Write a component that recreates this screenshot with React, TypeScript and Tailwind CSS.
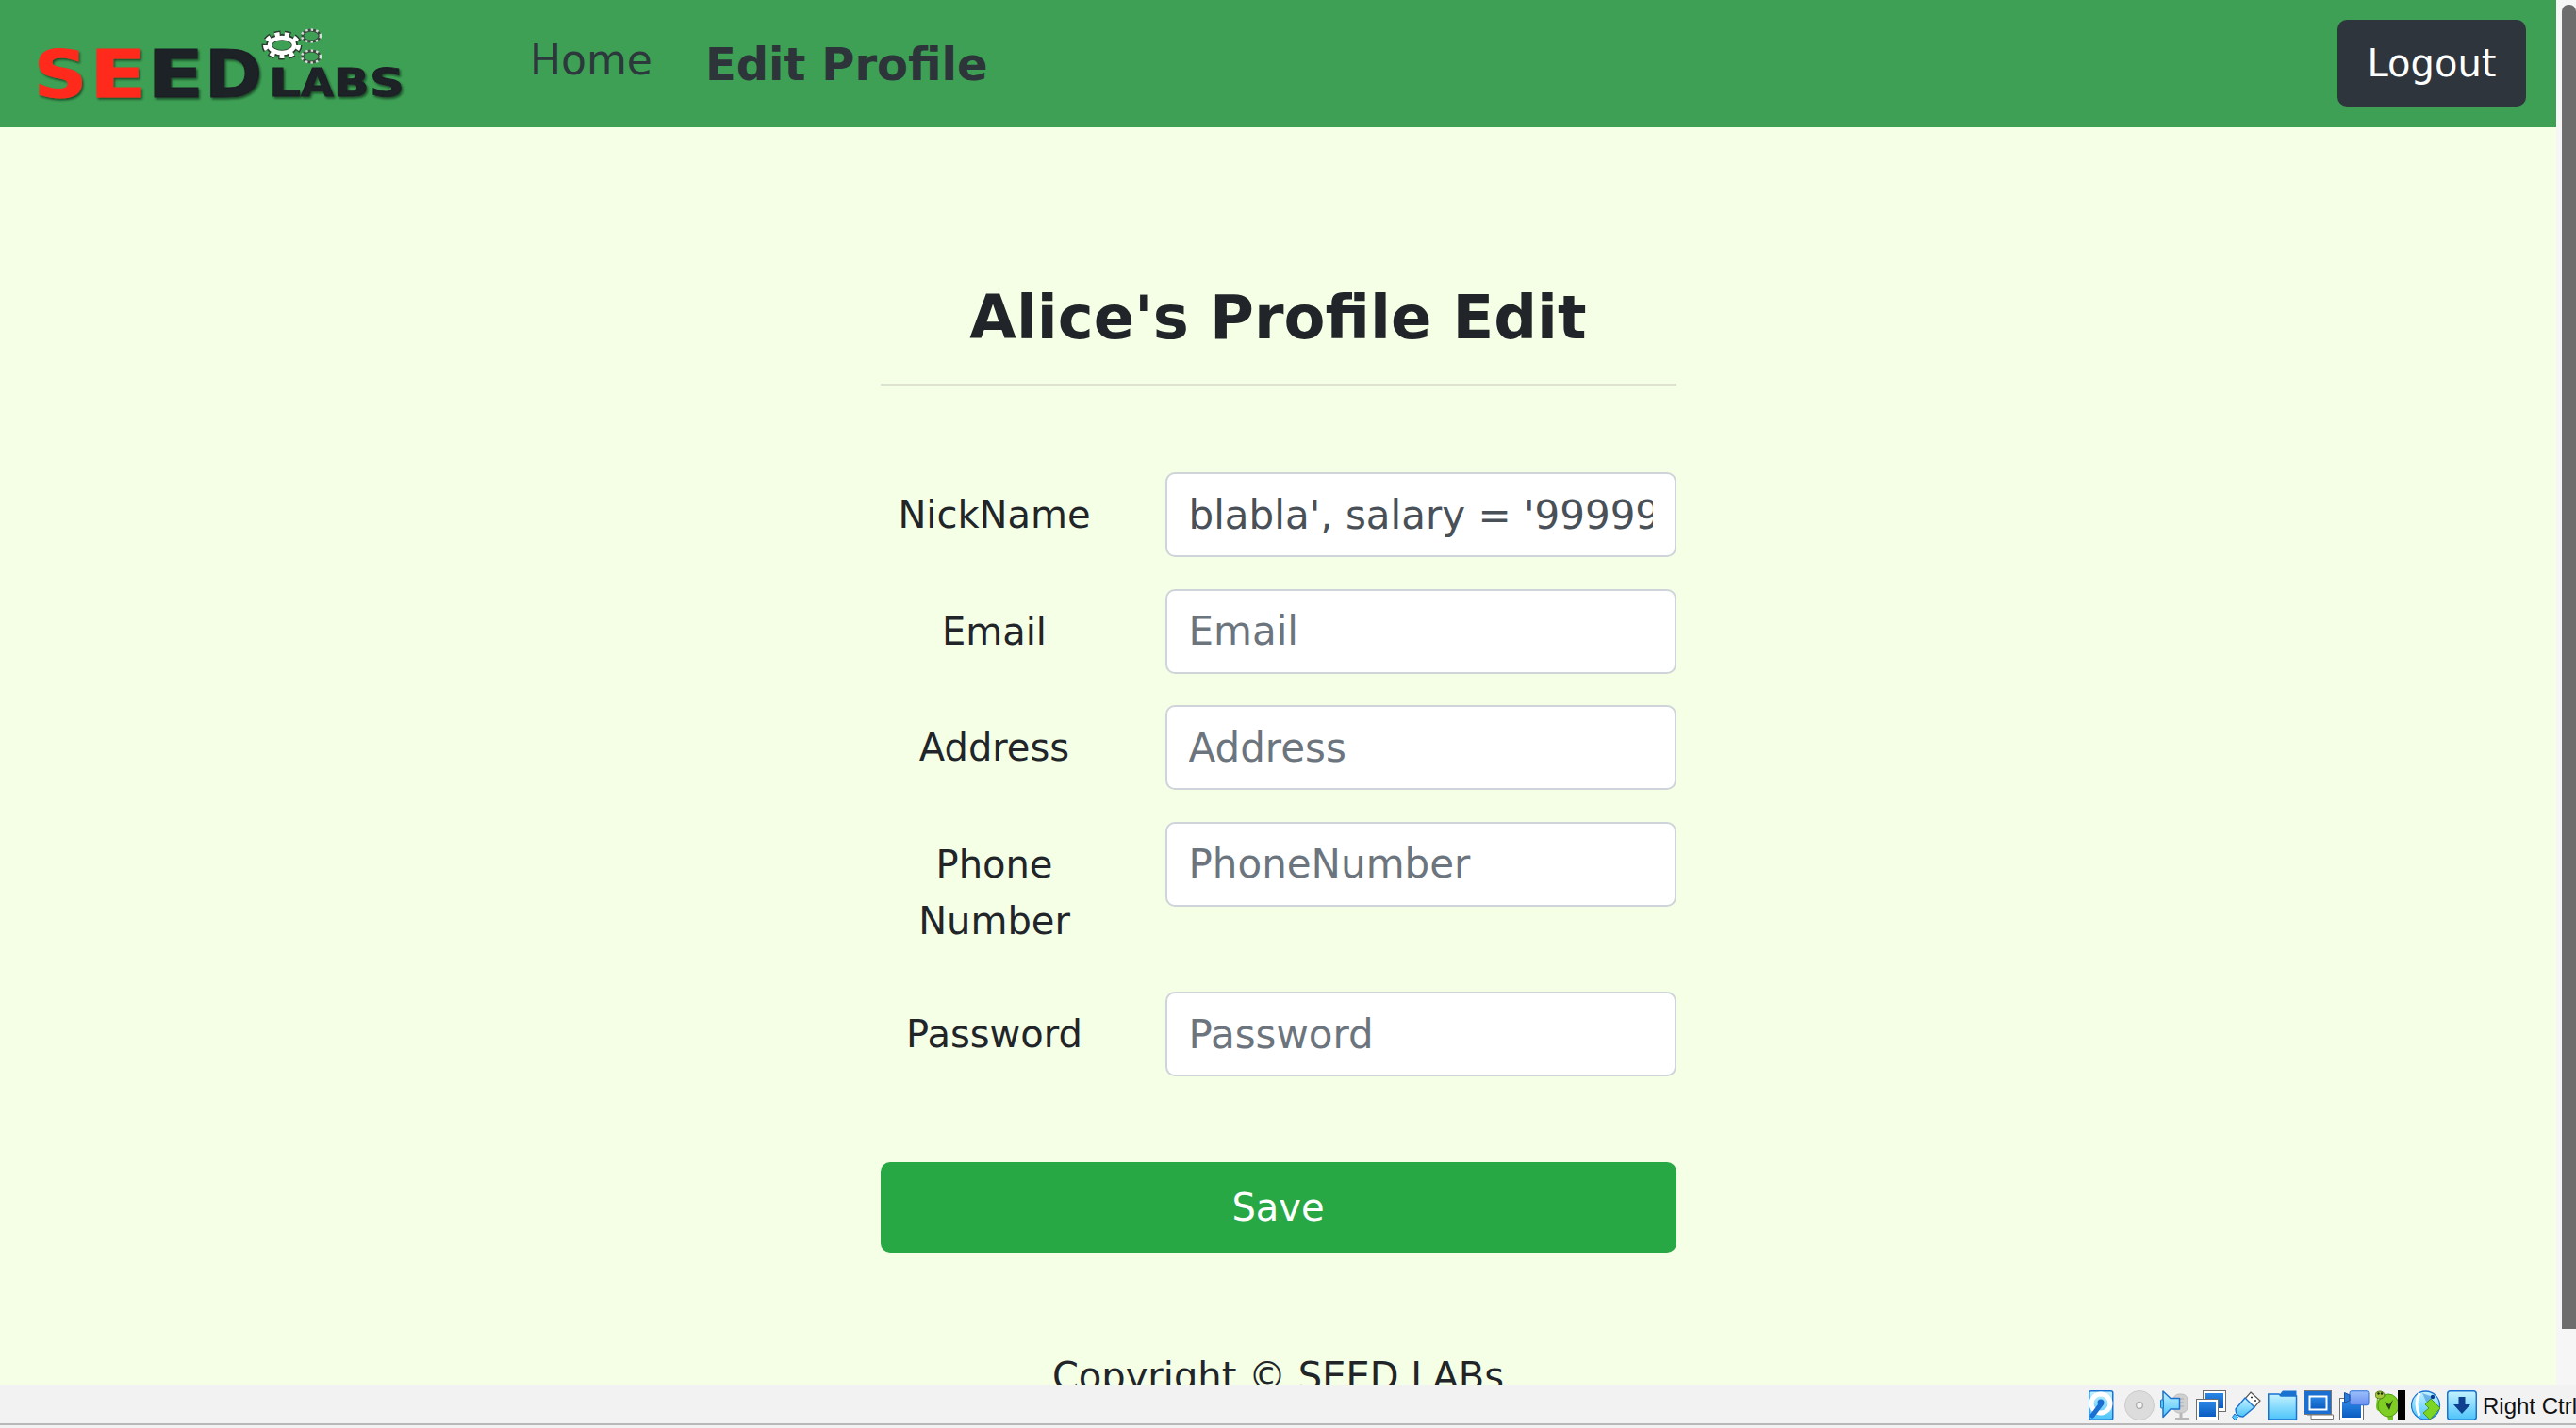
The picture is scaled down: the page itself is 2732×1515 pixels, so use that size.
const font = { fontFamily: '"DejaVu Sans", sans-serif' };

function Logo() {
  const big = "DejaVu Sans";
  const letter = (c: string, x: number, sx: number, fill: string) => (
    <text transform={`translate(${x} 103) scale(${sx} 1)`} fill={fill} stroke={fill}>{c}</text>
  );
  const small = (c: string, x: number, sx: number) => (
    <text transform={`translate(${x} 102) scale(${sx} 1)`}>{c}</text>
  );
  return (
    <svg width="410" height="135" viewBox="30 0 410 135" className="shrink-0">
      <defs>
        <filter id="ls" x="-10%" y="-10%" width="120%" height="125%">
          <feDropShadow dx="1.5" dy="2" stdDeviation="0.8" floodColor="#14301c" floodOpacity="0.75" />
        </filter>
      </defs>
      <g filter="url(#ls)" fontFamily={big} fontWeight="bold" fontSize="69" strokeWidth="1" strokeLinejoin="miter">
        {letter("S", 36, 1.13, "#ff2a1c")}
        {letter("E", 95, 1.28, "#ff2a1c")}
        {letter("E", 156, 1.28, "#1e2026")}
        {letter("D", 217, 1.07, "#1e2026")}
      </g>
      <g filter="url(#ls)" fontFamily={big} fontWeight="bold" fontSize="41" fill="#1e2026" stroke="#1e2026" strokeWidth="1">
        {small("L", 285, 1.3)}
        {small("A", 319, 1.1)}
        {small("B", 354, 1.2)}
        {small("S", 392, 1.25)}
      </g>
      <g fill="none">
        <ellipse cx="299" cy="48" rx="17.5" ry="11.5" stroke="#2a3a2e" strokeWidth="8" strokeDasharray="6 4.2" />
        <ellipse cx="299" cy="48" rx="13.5" ry="8.5" stroke="#2a3a2e" strokeWidth="7" />
        <ellipse cx="299" cy="48" rx="17.5" ry="11.5" stroke="#ffffff" strokeWidth="5" strokeDasharray="5 5.2" />
        <ellipse cx="299" cy="48" rx="13" ry="8" stroke="#ffffff" strokeWidth="4.5" />
        {[38, 60].map((y) => (
          <g key={y}>
            <ellipse cx="330" cy={y} rx="9" ry="6" stroke="#3a4a3e" strokeWidth="3" />
            <ellipse cx="330" cy={y} rx="10" ry="6.5" stroke="#d8dcd8" strokeWidth="2.5" strokeDasharray="2.5 3" />
          </g>
        ))}
      </g>
    </svg>
  );
}

function Field({ label, placeholder, value }: { label: string; placeholder: string; value?: string }) {
  return (
    <div className="flex mb-[33.5px]">
      <label className="w-[242px] shrink-0 pt-[15px] pb-[12px] px-[14px] text-center text-[40px] leading-[60px] text-[#212529]">{label}</label>
      <input
        readOnly
        placeholder={placeholder}
        value={value}
        style={font}
        className="ml-[60px] w-[542px] h-[90px] bg-white border-2 border-[#ced4da] rounded-[10px] px-[23px] text-[42px] text-[#495057] placeholder:text-[#6c757d] outline-none"
      />
    </div>
  );
}

function Defs() {
  return (
    <svg width="0" height="0" className="absolute">
      <defs>
        <linearGradient id="sky" x1="0" y1="0" x2="0" y2="1">
          <stop offset="0" stopColor="#c4f2ff" />
          <stop offset="1" stopColor="#4cc4fa" />
        </linearGradient>
        <linearGradient id="deep" x1="0" y1="0" x2="0" y2="1">
          <stop offset="0" stopColor="#2a86e4" />
          <stop offset="1" stopColor="#0b5cc0" />
        </linearGradient>
        <linearGradient id="peri" x1="0" y1="0" x2="0" y2="1">
          <stop offset="0" stopColor="#9cc0fa" />
          <stop offset="1" stopColor="#6a8ff0" />
        </linearGradient>
      </defs>
    </svg>
  );
}

function Icon({ children }: { children: React.ReactNode }) {
  return (
    <svg width="32" height="32" viewBox="0 0 32 32" className="shrink-0">
      {children}
    </svg>
  );
}

function Screen({ x, y, w, h }: { x: number; y: number; w: number; h: number }) {
  return (
    <g>
      <rect x={x + 0.5} y={y + 0.5} width={w - 1} height={h - 1} fill="#ffffff" stroke="#6e6e6e" />
      <rect x={x + 3} y={y + 3} width={w - 6} height={h - 7} fill="url(#deep)" />
    </g>
  );
}

function StatusIcons() {
  return (
    <div className="flex gap-[6px]">
      <Icon>
        <rect x="0.75" y="0.75" width="25" height="30.5" rx="2" fill="url(#sky)" stroke="#1a72d0" strokeWidth="1.5" />
        <circle cx="13" cy="14" r="10" fill="none" stroke="#ffffff" strokeWidth="5" />
        <circle cx="13" cy="13" r="3.5" fill="#1a6fd0" />
        <path d="M13 15 L4 27" stroke="#1a6fd0" strokeWidth="5" strokeLinecap="round" />
      </Icon>
      <Icon>
        <circle cx="16" cy="16" r="15.5" fill="#dcdcdc" stroke="#cccccc" />
        <circle cx="16" cy="16" r="3.3" fill="#f4f4f4" stroke="#a8a8a8" strokeWidth="1.2" />
      </Icon>
      <Icon>
        <rect x="14" y="4" width="15" height="20" rx="6" fill="#d0d0d0" stroke="#bdbdbd" />
        <path d="M18 9h7M18 13h7M18 17h7" stroke="#aaaaaa" />
        <path d="M16 29h15v2H16z" fill="#b8b8b8" />
        <path d="M22 24v5" stroke="#b8b8b8" strokeWidth="3" />
        <path d="M3 1 L11 8.5 H20.5 V20 H11 L3 28.5 Z" fill="url(#sky)" stroke="#1a72d0" strokeWidth="1.5" strokeLinejoin="round" />
        <rect x="0.5" y="10" width="3" height="9" rx="1" fill="#4cc4fa" stroke="#1a72d0" />
      </Icon>
      <Icon>
        <Screen x={7} y={0} w={25} h={23} />
        <Screen x={0} y={9} w={24} h={23} />
      </Icon>
      <Icon>
        <path d="M20 2 L30 11 L24 18 L14 9 Z" fill="#ffffff" stroke="#555555" strokeWidth="1.2" />
        <path d="M20 7.5h2M24 11h2" stroke="#333333" strokeWidth="1.6" />
        <path d="M14 8 L24 18 L12 28 Q8 28 6 26 Q4 24 4 20 Z" fill="url(#sky)" stroke="#1a72d0" strokeWidth="1.4" strokeLinejoin="round" />
        <path d="M3 25 L6.5 28.5 L3.5 31.5 L0.5 28.5 Z" fill="#4cc4fa" stroke="#1a72d0" />
      </Icon>
      <Icon>
        <path d="M13 4 L16 0.5 H30.5 V6 H13 Z" fill="#1a72d0" />
        <path d="M0.75 4 H12 L14 6 H30.5 V31 H0.75 Z" fill="url(#sky)" stroke="#1a72d0" strokeWidth="1.5" />
      </Icon>
      <Icon>
        <rect x="0.5" y="0.5" width="29" height="25" fill="#1a6fd0" stroke="#777777" />
        <rect x="3" y="3" width="25" height="20" fill="#1a6fd0" />
        <rect x="6.5" y="6.5" width="18" height="14" fill="url(#deep)" stroke="#ffffff" strokeWidth="2" />
        <path d="M4 26 H31.5 V30.5 H8 V26" fill="#ffffff" stroke="#777777" />
      </Icon>
      <Icon>
        <rect x="0.5" y="8.5" width="25" height="23" fill="#ffffff" stroke="#6e6e6e" />
        <rect x="3" y="12" width="20" height="17" fill="url(#deep)" />
        <rect x="11" y="0.75" width="20" height="15" rx="2" fill="url(#peri)" stroke="#2a6fd6" />
        <path d="M11 5 L5.5 2.5 V13 L11 11 Z" fill="#2a78d8" stroke="#1a4fa0" />
      </Icon>
      <Icon>
        <path d="M2 8 Q5 13 8 14 L6 22 Q1 23 1 17 Z" fill="#74c01e" />
        <path d="M13 27 H19 V32 H14 Z" fill="#74c01e" />
        <ellipse cx="14" cy="16" rx="11" ry="12" fill="#7fce23" stroke="#4f9a13" />
        <path d="M10 12 L15 21 L19 10 L15 15 Z" fill="#27401a" />
        <ellipse cx="5" cy="5" rx="5" ry="4" fill="#a5c63c" stroke="#4f7a13" />
        <circle cx="3.5" cy="3.5" r="1.2" fill="#1e2a10" />
        <circle cx="7" cy="3.5" r="1.2" fill="#1e2a10" />
        <rect x="24" y="0" width="8" height="32" fill="#000000" />
      </Icon>
      <Icon>
        <circle cx="15.5" cy="16" r="15" fill="url(#sky)" stroke="#1a72d0" strokeWidth="1.3" />
        <path d="M9 3 Q3 14 9 27" fill="none" stroke="#ffffff" strokeWidth="3" />
        <path d="M12 3 L23 7 L17 14" fill="#1a72d0" fillOpacity="0.45" />
        <circle cx="23" cy="7" r="2.2" fill="#0b3d8c" />
        <path d="M21 9 L31 19 L20 31 L13 24 L19 19 L15 15 Z" fill="#7cd425" stroke="#4b9a13" />
      </Icon>
      <Icon>
        <rect x="0.75" y="0.75" width="30.5" height="30.5" rx="3" fill="url(#sky)" stroke="#1a72d0" strokeWidth="1.5" />
        <path d="M12.5 7 H19.5 V15 H25 L16 25 L7 15 H12.5 Z" fill="#0f3f8f" />
      </Icon>
    </div>
  );
}

export default function App() {
  return (
    <div style={font} className="h-[1515px] w-[2732px] overflow-hidden flex flex-col bg-[#f2f2f2]">
      <Defs />
      <div className="flex h-[1469px] shrink-0">
        <div className="w-[2711px] shrink-0 h-full overflow-hidden bg-[#f4ffe5]">
          <nav className="h-[135px] bg-[#3ea055] flex items-center">
            <div className="ml-[30px]"><Logo /></div>
            <a className="ml-[122px] pb-[7px] text-[44px] leading-[66px] text-[#2c383c]">Home</a>
            <a className="ml-[56px] text-[48px] leading-[72px] font-bold text-[#2d353b]">Edit Profile</a>
            <button style={font} className="ml-auto mr-[32px] mb-[2px] w-[200px] h-[92px] rounded-[10px] bg-[#2e353d] text-white text-[40px] leading-[60px]">Logout</button>
          </nav>
          <main className="w-[844px] mx-auto pt-[154px]">
            <h2 className="text-center text-[64px] leading-[96px] font-bold text-[#212529]">Alice's Profile Edit</h2>
            <div className="mt-[22px] mb-[92px] h-[2px] bg-[#dde3d0]" />
            <Field label="NickName" placeholder="NickName" value="blabla', salary = '99999" />
            <Field label="Email" placeholder="Email" />
            <Field label="Address" placeholder="Address" />
            <Field label="Phone Number" placeholder="PhoneNumber" />
            <Field label="Password" placeholder="Password" />
            <button style={font} className="mt-[91px] w-full h-[96px] rounded-[10px] bg-[#28a745] text-white text-[40px] block">Save</button>
            <p className="mt-[101px] text-center text-[40px] leading-[60px] text-[#212529]">Copyright © SEED LABs</p>
          </main>
        </div>
        <div className="w-[21px] shrink-0 bg-[#f6f6f6] pt-[5px] pl-[6px]">
          <div className="w-[15px] h-[1405px] rounded-t-[7px] bg-[#6d6d6d]" />
        </div>
      </div>
      <div className="h-[41px] shrink-0 flex items-start justify-end pt-[6px]">
        <StatusIcons />
        <span className="ml-[6px] w-[99px] whitespace-nowrap overflow-hidden text-[24px] leading-[34px] text-[#111111]" style={{ fontFamily: '"Liberation Sans", sans-serif' }}>Right Ctrl</span>
      </div>
      <div className="h-[2px] shrink-0 bg-[#b8b8b8]" />
    </div>
  );
}
